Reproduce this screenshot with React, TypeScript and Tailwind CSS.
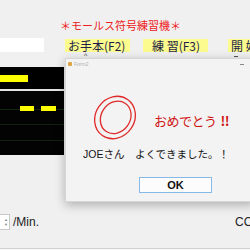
export default function App() {
  return (
    <div className="relative w-[250px] h-[250px] overflow-hidden bg-[#f0f0f0] font-['Liberation_Sans','Noto_Sans_CJK_JP',sans-serif]">
      {/* Title */}
      <div className="pt-[19px] pl-[60px] text-[11px] leading-[13px] text-[#ee2020] font-['Noto_Sans_CJK_JP',sans-serif] whitespace-nowrap">
        ＊モールス符号練習機＊
      </div>

      {/* Input + function buttons */}
      <div className="mt-[6px] flex items-center h-[14px] whitespace-nowrap font-['Noto_Sans_CJK_JP',sans-serif]">
        <div className="w-[44px] h-[14px] bg-white shrink-0" />
        <div className="ml-[21px] w-[65px] h-[13px] shrink-0 bg-[#fbfb8e] text-[12px] leading-[13px] text-[#1e1e46] pl-[3px]">
          お手本(F2)
        </div>
        <div className="ml-[13px] w-[65px] h-[13px] shrink-0 bg-[#fbfb8e] text-[12px] leading-[13px] text-[#1e1e46] pl-[9px]">
          練 習(F3)
        </div>
        <div className="ml-[20px] w-[40px] h-[13px] shrink-0 bg-[#fbfb8e] text-[12px] leading-[13px] text-[#1e1e46] pl-[3px]">
          開 始
        </div>
      </div>

      {/* Signal panel */}
      <div className="mt-[15px] w-[64px] h-[22px] bg-black flex items-center">
        <div className="w-[28px] h-[7px] bg-[#ffff00]" />
      </div>
      <div className="w-[64px] h-[2px] bg-[#e4e4e4]" />

      {/* Received panel */}
      <div className="w-[64px] h-[64px] bg-[#030303] flex flex-col">
        <div className="h-[19px] border-b border-[#0d260d] flex pt-[15px]">
          <div className="ml-[20px] w-[14px] h-[5px] bg-[#ffff00]" />
          <div className="ml-[7px] w-[15px] h-[5px] bg-[#ffff00]" />
        </div>
        <div className="h-[15px] border-b border-[#0d260d]" />
        <div className="h-[16px] border-b border-[#0d260d]" />
      </div>

      {/* Speed row */}
      <div className="mt-[59px] flex items-center h-[16px] whitespace-nowrap">
        <div className="w-[10px] h-[16px] bg-white border-r border-y border-[#c8c8c8] flex flex-col items-end justify-center pr-[1px] text-[4px] leading-[5px] text-[#888]">
          <span>▲</span>
          <span>▼</span>
        </div>
        <span className="ml-[3px] text-[12px] text-[#222]">/Min.</span>
        <span className="ml-auto w-[15px] overflow-hidden text-[12px] text-[#222]">CCW</span>
      </div>

      <div className="mt-[18px] border-t border-[#cfcfcf] h-[2px] bg-[#fafafa]" />

      {/* underlying marks above dialog */}
      <span className="absolute left-[84px] top-[52px] text-[7px] leading-[7px] text-[#333]">^</span>
      <span className="absolute left-[234px] top-[56px] w-[4px] h-px bg-[#555]" />

      {/* Dialog window */}
      <div className="absolute left-[65px] top-[58px] w-[190px] h-[144px] bg-[#f3f3f3] border border-[#d6d6d6] shadow-[0_3px_10px_rgba(0,0,0,0.28)] flex flex-col">
        <div className="h-[10px] flex items-center pl-[2px] pr-[10px]">
          <div className="w-[4px] h-[4px] bg-[#d9a640] rounded-[1px]" />
          <span className="ml-[2px] text-[5px] leading-[6px] text-[#b0b0b0]">Form2</span>
          <span className="ml-auto w-[4px] h-px bg-[#888]" />
        </div>

        <div className="mt-[26px] pl-[28px] flex items-center">
          <svg width="42" height="45" viewBox="0 0 42 45" className="shrink-0">
            <g transform="rotate(35 21 22.5)" fill="none" stroke="#e02a2a" strokeWidth="1.3">
              <ellipse cx="21" cy="22.5" rx="19.5" ry="22" />
              <ellipse cx="21.5" cy="22" rx="14.5" ry="17" />
            </g>
          </svg>
          <span className="ml-[18px] mt-[5px] text-[13px] leading-[15px] tracking-[-0.5px] text-[#d01414] whitespace-nowrap font-['Noto_Sans_CJK_JP',sans-serif]">
            おめでとう<span className="ml-[4px] font-bold">!!</span>
          </span>
        </div>

        <div className="mt-[8px] pl-[17px] text-[10.5px] leading-[12px] text-[#141414] whitespace-nowrap font-['Liberation_Sans','Noto_Sans_CJK_JP',sans-serif]">
          JOEさん　よくできました。！
        </div>

        <div className="mt-[17px] ml-[73px] w-[73px] h-[16px] bg-[#fcfcfc] border border-[#88b8e8] flex items-center justify-center text-[11px] text-[#111] font-bold">
          OK
        </div>
      </div>
    </div>
  )
}
